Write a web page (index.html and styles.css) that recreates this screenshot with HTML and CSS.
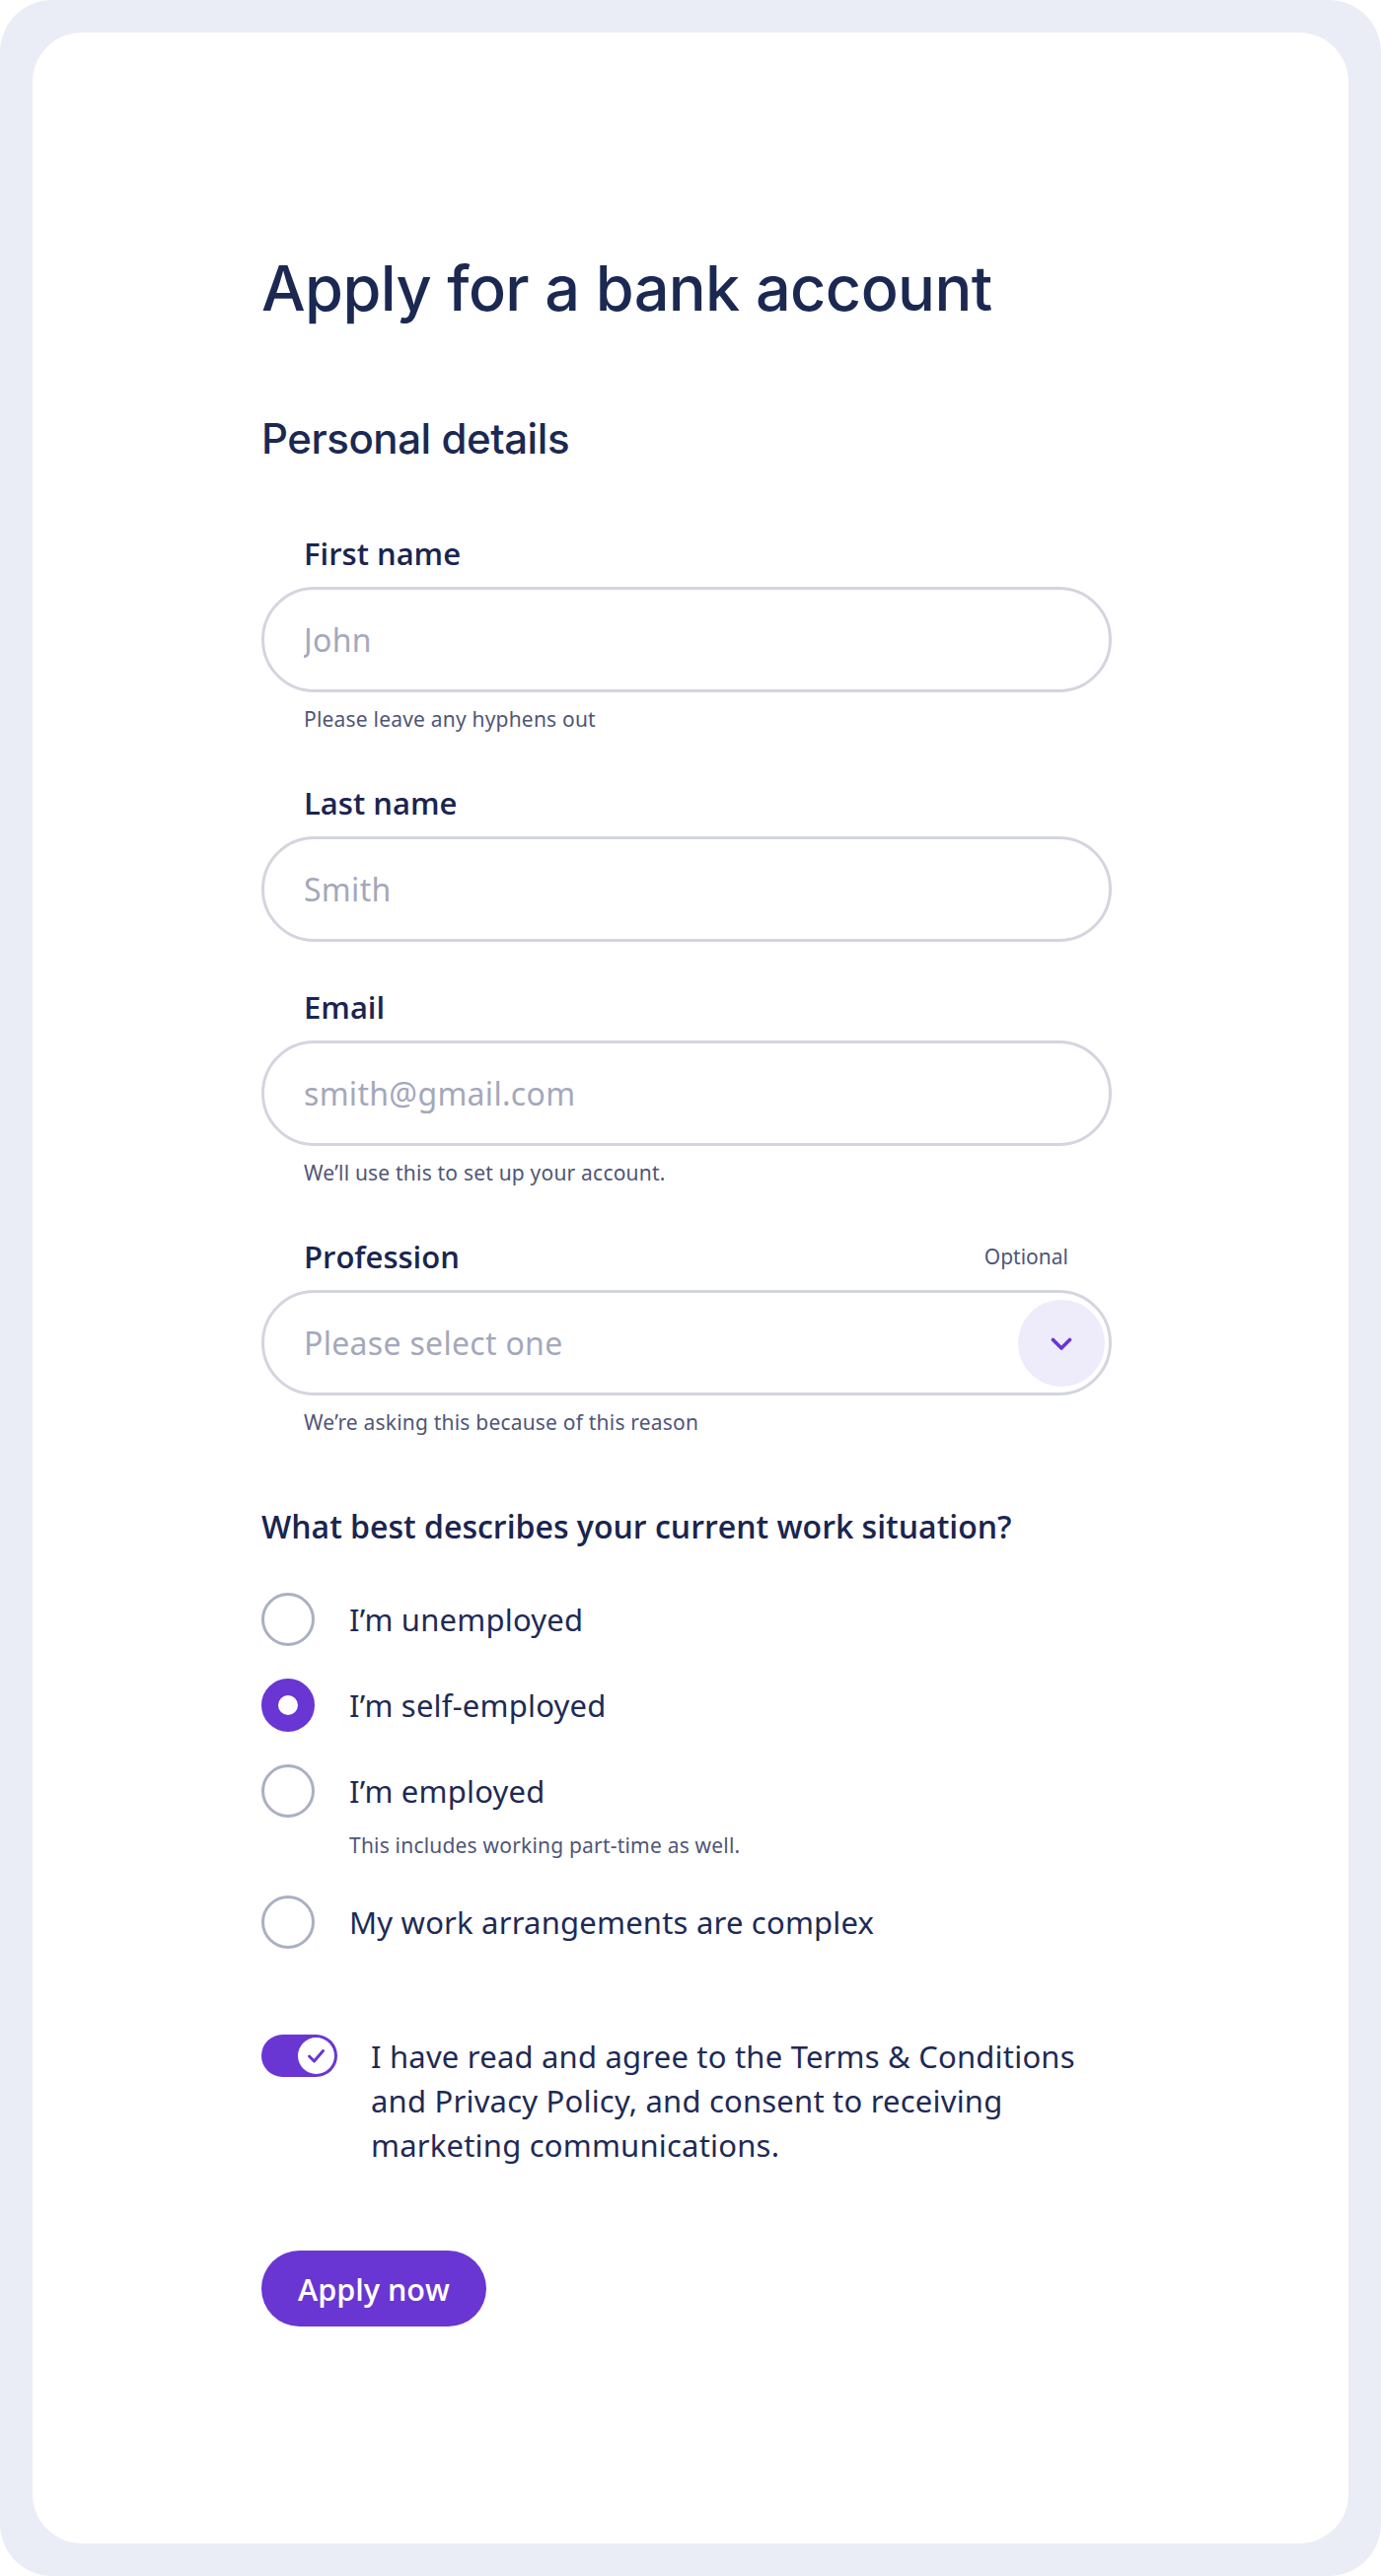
FILE: index.html
```html
<!DOCTYPE html>
<html lang="en">
<head>
<meta charset="utf-8">
<title>Apply for a bank account</title>
<link rel="stylesheet" href="styles.css">
</head>
<body>
<div class="frame">
  <main class="card">
    <form class="form">
      <h1 class="title">Apply for a bank account</h1>
      <h2 class="section-title">Personal details</h2>

      <div class="fields">
        <div class="field">
          <label class="label" for="first">First name</label>
          <input class="text-input" id="first" type="text" placeholder="John">
          <p class="helper">Please leave any hyphens out</p>
        </div>

        <div class="field">
          <label class="label" for="last">Last name</label>
          <input class="text-input" id="last" type="text" placeholder="Smith">
        </div>

        <div class="field">
          <label class="label" for="email">Email</label>
          <input class="text-input" id="email" type="email" placeholder="smith@gmail.com">
          <p class="helper">We’ll use this to set up your account.</p>
        </div>

        <div class="field">
          <div class="label-row">
            <span class="label">Profession</span>
            <span class="optional">Optional</span>
          </div>
          <div class="select">
            <span class="select-placeholder">Please select one</span>
            <span class="select-btn">
              <svg width="22" height="14" viewBox="0 0 22 14" aria-hidden="true"><polyline points="2.5,2.5 11,11 19.5,2.5" fill="none" stroke="#6936d3" stroke-width="3.6" stroke-linecap="round" stroke-linejoin="round"/></svg>
            </span>
          </div>
          <p class="helper">We’re asking this because of this reason</p>
        </div>
      </div>

      <h3 class="question">What best describes your current work situation?</h3>

      <div class="radios">
        <div class="radio-item">
          <span class="radio"></span>
          <div class="radio-text"><span class="radio-label">I’m unemployed</span></div>
        </div>
        <div class="radio-item">
          <span class="radio radio-checked"></span>
          <div class="radio-text"><span class="radio-label">I’m self-employed</span></div>
        </div>
        <div class="radio-item">
          <span class="radio"></span>
          <div class="radio-text">
            <span class="radio-label">I’m employed</span>
            <p class="radio-helper">This includes working part-time as well.</p>
          </div>
        </div>
        <div class="radio-item">
          <span class="radio"></span>
          <div class="radio-text"><span class="radio-label">My work arrangements are complex</span></div>
        </div>
      </div>

      <div class="consent">
        <span class="toggle">
          <span class="knob">
            <svg width="37" height="37" viewBox="0 0 37 37" aria-hidden="true"><polyline points="11.5,19 16.5,24 25.5,13.5" fill="none" stroke="#6936d3" stroke-width="3" stroke-linecap="round" stroke-linejoin="round"/></svg>
          </span>
        </span>
        <p class="consent-text">I have read and agree to the Terms &amp; Conditions<br>and Privacy Policy, and consent to receiving<br>marketing communications.</p>
      </div>

      <button type="button" class="apply-btn">Apply now</button>
    </form>
  </main>
</div>
</body>
</html>
```

FILE: styles.css
```css
* {
  box-sizing: border-box;
}

html, body {
  margin: 0;
  padding: 0;
  background: #ffffff;
}

.frame {
  width: 1400px;
  height: 2612px;
  padding: 33px;
  background: #eaedf5;
  border-radius: 53px;
}

.card {
  height: 100%;
  background: #ffffff;
  border-radius: 50px;
  padding: 223px 0 0 232px;
}

.form {
  width: 862px;
  display: flex;
  flex-direction: column;
  align-items: flex-start;
}

.title {
  margin: 0;
  font-family: Inter, "Liberation Sans", sans-serif;
  font-weight: 500;
  font-size: 63px;
  line-height: 72px;
  letter-spacing: -0.6px;
  color: #1b2952;
}

.section-title {
  margin: 91px 0 0;
  font-family: Inter, "Liberation Sans", sans-serif;
  font-weight: 500;
  font-size: 42px;
  line-height: 52px;
  letter-spacing: -0.45px;
  color: #1b2952;
}

.fields {
  margin-top: 72px;
  width: 100%;
  display: flex;
  flex-direction: column;
  gap: 48px;
}

.field {
  display: flex;
  flex-direction: column;
  width: 100%;
}

.label {
  display: block;
  padding: 0 43px;
  font-family: "Open Sans", "Noto Sans", sans-serif;
  font-weight: 600;
  font-size: 31px;
  line-height: 36px;
  color: #1a2550;
  margin-bottom: 16px;
}

.label-row {
  display: flex;
  justify-content: space-between;
  align-items: center;
  margin-bottom: 16px;
}

.label-row .label {
  margin-bottom: 0;
}

.optional {
  padding-right: 44px;
  font-family: "Noto Sans", sans-serif;
  font-size: 21px;
  line-height: 36px;
  color: #4f5677;
}

.text-input,
.select {
  width: 100%;
  height: 107px;
  border: 3px solid #d3d5df;
  border-radius: 54px;
  background: #ffffff;
  padding: 0 40px;
  font-family: "Noto Sans", sans-serif;
  font-size: 32px;
  letter-spacing: 0.3px;
  color: #1e2a55;
  outline: none;
}

.text-input::placeholder {
  color: #a4a8bb;
  opacity: 1;
}

.select {
  display: flex;
  align-items: center;
  justify-content: space-between;
  padding-right: 4px;
}

.select-placeholder {
  color: #a4a8bb;
}

.select-btn {
  width: 88px;
  height: 88px;
  border-radius: 50%;
  background: #eeebfa;
  display: flex;
  align-items: center;
  justify-content: center;
  padding-top: 2px;
}

.helper {
  margin: 13px 0 5px;
  padding: 0 43px;
  font-family: "Noto Sans", sans-serif;
  font-size: 21px;
  line-height: 28px;
  letter-spacing: 0.2px;
  color: #4f5677;
}

.question {
  margin: 67px 0 0;
  font-family: "Open Sans", "Noto Sans", sans-serif;
  font-weight: 600;
  font-size: 32px;
  line-height: 40px;
  color: #1a2550;
}

.radios {
  margin-top: 47px;
  display: flex;
  flex-direction: column;
  gap: 33px;
}

.radio-item {
  display: flex;
  align-items: flex-start;
  gap: 35px;
}

.radio {
  flex: none;
  width: 54px;
  height: 54px;
  border-radius: 50%;
  border: 3.5px solid #aab0c4;
  background: #ffffff;
}

.radio-checked {
  border: 17.5px solid #6936d3;
}

.radio-text {
  display: flex;
  flex-direction: column;
}

.radio-label {
  font-family: "Noto Sans", sans-serif;
  font-size: 31px;
  line-height: 54px;
  letter-spacing: 0.2px;
  color: #1e2a55;
}

.radio-helper {
  margin: 14px 0 4px;
  font-family: "Noto Sans", sans-serif;
  font-size: 21px;
  line-height: 28px;
  letter-spacing: 0.2px;
  color: #4f5677;
}

.consent {
  margin-top: 87px;
  display: flex;
  align-items: flex-start;
  gap: 34px;
  width: 100%;
}

.toggle {
  flex: none;
  width: 77px;
  height: 43px;
  border-radius: 22px;
  background: #6936d3;
  display: flex;
  align-items: center;
  justify-content: flex-end;
  padding-right: 3px;
}

.knob {
  width: 37px;
  height: 37px;
  border-radius: 50%;
  background: #ffffff;
  display: block;
}

.knob svg {
  display: block;
}

.consent-text {
  margin: 0;
  font-family: "Noto Sans", sans-serif;
  font-size: 31px;
  line-height: 45px;
  letter-spacing: 0.2px;
  color: #1e2a55;
}

.apply-btn {
  margin-top: 84px;
  height: 77px;
  padding: 0 37px;
  border: none;
  border-radius: 39px;
  background: #6936d3;
  color: #ffffff;
  font-family: "Open Sans", "Noto Sans", sans-serif;
  font-weight: 600;
  font-size: 30.5px;
  cursor: pointer;
}
```
